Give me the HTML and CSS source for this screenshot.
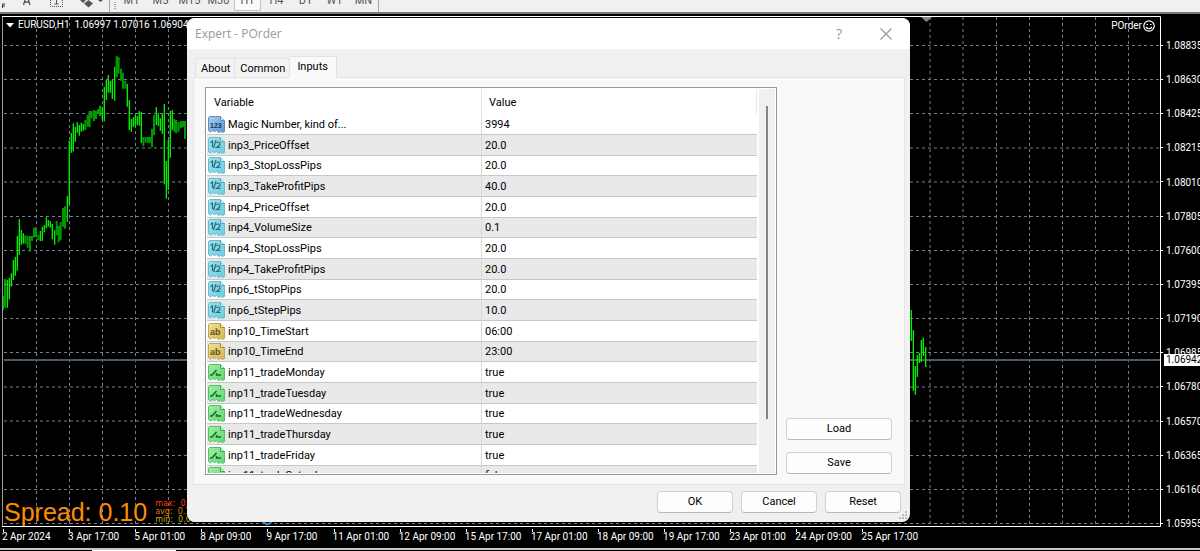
FILE: index.html
```
<!DOCTYPE html>
<html lang="en">
<head>
<meta charset="utf-8">
<title>EURUSD,H1 - Expert - POrder</title>
<link rel="stylesheet" href="styles.css">
</head>
<body>
<svg class="defs" aria-hidden="true">
  <defs>
    <linearGradient id="gBlue" x1="0" y1="0" x2="1" y2="1"><stop offset="0" stop-color="#a9cdee"/><stop offset="1" stop-color="#5c98d2"/></linearGradient>
    <linearGradient id="gCyan" x1="0" y1="0" x2="1" y2="1"><stop offset="0" stop-color="#a5e0ea"/><stop offset="1" stop-color="#6ccbe0"/></linearGradient>
    <linearGradient id="gGold" x1="0" y1="0" x2="1" y2="1"><stop offset="0" stop-color="#f0e29a"/><stop offset="1" stop-color="#d2b850"/></linearGradient>
    <linearGradient id="gGreen" x1="0" y1="0" x2="1" y2="1"><stop offset="0" stop-color="#a4eda4"/><stop offset="1" stop-color="#5fd673"/></linearGradient>
    <path id="sheet" d="M1.5.5H12.500L16.500 4.500V15.500L14.500 16.500L12.500 15.500L10.500 16.500L8.500 14.500L6.500 15.500L4.500 14.500L2.500 16L.5 14.500V1.500Z"/>
    <path id="fold" d="M12.500.5V4.500H16.500"/>
    <symbol id="int" viewBox="0 0 17 17"><use href="#sheet" fill="url(#gBlue)" stroke="#5b8fc4"/><use href="#fold" fill="#d3e6f7" stroke="#5b8fc4"/><text class="glyph" x="2" y="12" fill="#123a66">123</text></symbol>
    <symbol id="dbl" viewBox="0 0 17 17"><use href="#sheet" fill="url(#gCyan)" stroke="#67bccd"/><use href="#fold" fill="#c9eff5" stroke="#55a9bc"/><path d="M2.500 5.500L4.500 4V10M8 3L5.500 11M8.500 6Q9 5 10.500 5T12 7Q12 8 8.500 10.500H12.500" fill="none" stroke="#1d7083" stroke-width="1.200"/></symbol>
    <symbol id="str" viewBox="0 0 17 17"><use href="#sheet" fill="url(#gGold)" stroke="#c0a550"/><use href="#fold" fill="#f5ecc0" stroke="#a58c3c"/><text class="glyph wide" x="2" y="12" fill="#665010">ab</text></symbol>
    <symbol id="bool" viewBox="0 0 17 17"><use href="#sheet" fill="url(#gGreen)" stroke="#4fc267"/><use href="#fold" fill="#c4f5c8" stroke="#3eab55"/><path d="M2 11H4L8.500 6M8.500 9V11H13" fill="none" stroke="#126a28" stroke-width="1.500"/></symbol>
  </defs>
</svg>

<div class="terminal">
  <header class="toolbar">
    <svg class="tools" viewBox="0 0 116 12" aria-hidden="true">
      <path d="M2.500 8V4H5M2.500 6H5" fill="none" stroke="#333"/>
      <path d="M23.500 5L25 0M30 5L28.500 0M24.500 2H29" fill="none" stroke="#555" stroke-width="1.300"/>
      <path d="M50.500 0V6.500H62.500V0" fill="none" stroke="#555" stroke-dasharray="1 1"/>
      <path d="M56.500 0V4M54.500 4H58.500" fill="none" stroke="#555"/>
      <path d="M80 0L83 3L86 0M84 3.500L88.500 0L93 3.500L88.500 7.500ZM98 0H103L100.500 2Z" fill="#555"/>
      <path d="M109.500 0V12" stroke="#a8a8a8"/>
      <path d="M115 2V9" stroke="#a8a8a8" stroke-width="2" stroke-dasharray="1 1"/>
    </svg>
    <nav class="periods" aria-label="Timeframe">
      <button>M1</button><button>M5</button><button>M15</button><button>M30</button><button class="on">H1</button><button>H4</button><button>D1</button><button>W1</button><button>MN</button>
    </nav>
  </header>

  <main class="chart">
    <section class="plot">
      <svg class="canvas" viewBox="0 14 1164 514" preserveAspectRatio="none" aria-label="EURUSD hourly bars">
        <path class="grid" d="M36.500 17V526M69.500 17V526M102.500 17V526M135.500 17V526M168.500 17V526M930 17V526M963 17V526M996.500 17V526M1029.500 17V526M1062.500 17V526M1095.500 17V526M1128.500 17V526"/>
        <path class="grid" d="M4 45.500H1160M4 79.500H1160M4 113.500H1160M4 148H1160M4 182H1160M4 216.500H1160M4 250.500H1160M4 284.500H1160M4 318.500H1160M4 352.500H1160M4 387H1160M4 421H1160M4 455.500H1160M4 489.500H1160M4 523.500H1160"/>
        <path class="quote" d="M4 360H1160"/>
        <g class="bars" transform="translate(0 120) scale(.3333)">
          <path d="M9 528V570M15 477V563M22 480V563M28 474V538M34 460V500M40 420V480M46 410V467M52 348V452M58 297V404M64 330V374M70 340V371M121 333V363M127 320V363M133 315V337M139 292V325M145 300V320M151 303V323M157 312V358M164 330V374M202 228V306M208 62V253"/>
          <path class="dim" d="M76 346V371M83 348V383M90 348V395M96 348V362M102 323V352M108 322V352M115 345V360M170 303V346M176 318V367M182 306V361M189 264V320M195 259V326"/>
        </g>
        <g class="bars" transform="translate(0 40) scale(.3333)">
          <path d="M214 279V338M220 250V334M226 260V305M232 247V278M238 255V287M244 248V275M250 252V272M294 207V222M300 197V228M307 200V240M313 141V244M319 120V180M325 105V158M331 123V158M337 120V177M344 80V182M382 132V200M388 180V270M394 237V275M400 232V261M406 225V257M412 228V256M418 213V257M424 216V309M469 201V255M475 219V258M481 235V272M487 222V281M493 192V433M499 363V476M505 300V450M511 213V353M517 210V270"/>
          <path class="dim" d="M256 240V270M263 225V260M269 213V262M275 213V235M282 210V243M288 213V237M350 48V112M356 52V101M363 86V122M369 98V146M376 122V146M430 291V318M437 291V308M444 291V308M450 291V308M456 266V322M462 225V286M523 237V275M529 240V280M536 246V275M543 243V265M549 243V262M555 243V297"/>
        </g>
        <g class="bars" transform="translate(880 290) scale(.3333)">
          <path d="M94 60V153M100 120V302M106 228V314M112 195V261M118 189V219M124 150V216M130 143V198M137 171V231"/>
        </g>
        <path d="M262 520Q267 528 272 521" fill="none" stroke="#3d86c6" stroke-width="2"/>
        <path d="M921 17H932L926.500 22Z" fill="#778899"/>
        <path class="ticks" d="M1161 45.500H1163M1161 79.500H1163M1161 113.500H1163M1161 147.500H1163M1161 181.500H1163M1161 216.500H1163M1161 250.500H1163M1161 284.500H1163M1161 318.500H1163M1161 352.500H1163M1161 386.500H1163M1161 421.500H1163M1161 455.500H1163M1161 489.500H1163M1161 523.500H1163"/>
        <path d="M2.500 17V527" stroke="#9c9c9c"/>
        <path d="M2 16.500H1160.500V526.500H2" fill="none" stroke="#fff"/>
      </svg>
      <div class="legend">
        <svg viewBox="0 0 8 5" class="caret" aria-hidden="true"><path d="M0 0H8L4 4.500Z" fill="#fff"/></svg>
        <span>EURUSD,H1&nbsp; 1.06997 1.07016 1.06904</span>
      </div>
      <div class="expert">POrder
        <svg viewBox="0 0 12 12" class="smile" aria-hidden="true"><circle cx="6" cy="6" r="5.200" fill="none" stroke="#fff" stroke-width="1.200"/><path d="M3.500 4.500H5M7 4.500H8.500M3 7Q6 10.500 9 7" fill="none" stroke="#fff" stroke-width="1.200"/></svg>
      </div>
      <div class="spread">
        <strong>Spread: 0.10</strong>
        <ul><li class="max">max: &nbsp;0.30</li><li class="avg">avg: &nbsp;0.10</li><li class="min">min: &nbsp;0.00</li></ul>
      </div>
    </section>
    <aside class="prices">
      <span>1.08835</span><span>1.08630</span><span>1.08425</span><span>1.08215</span><span>1.08010</span><span>1.07805</span><span>1.07600</span><span>1.07395</span><span>1.07190</span><span>1.06985</span><span>1.06780</span><span>1.06570</span><span>1.06365</span><span>1.06160</span><span>1.05955</span>
      <b class="now">1.06942</b>
    </aside>
    <div class="times">
      <span>2 Apr 2024</span><span>3 Apr 17:00</span><span>5 Apr 01:00</span><span>8 Apr 09:00</span><span>9 Apr 17:00</span><span>11 Apr 01:00</span><span>12 Apr 09:00</span><span>15 Apr 17:00</span><span>17 Apr 01:00</span><span>18 Apr 09:00</span><span>19 Apr 17:00</span><span>23 Apr 01:00</span><span>24 Apr 09:00</span><span>25 Apr 17:00</span>
    </div>
  </main>
  <footer class="tabs-strip"><span></span></footer>

  <div class="dialog" role="dialog" aria-labelledby="dlg">
    <div class="titlebar">
      <h1 id="dlg">Expert - POrder</h1>
      <button class="help" aria-label="Help">?</button>
      <button class="close" aria-label="Close"><svg viewBox="0 0 12 12"><path d="M.5.5L11.500 11.500M11.500.5L.5 11.500" stroke="#999" stroke-width="1.200"/></svg></button>
    </div>
    <div class="tabs" role="tablist">
      <button role="tab">About</button><button role="tab">Common</button><button role="tab" class="active" aria-selected="true">Inputs</button>
    </div>
    <div class="panel">
      <div class="list">
        <div class="rows">
          <table>
            <thead><tr><th>Variable</th><th>Value</th></tr></thead>
            <tbody>
              <tr><td><svg><use href="#int"/></svg>Magic Number, kind of...</td><td>3994</td></tr>
              <tr><td><svg><use href="#dbl"/></svg>inp3_PriceOffset</td><td>20.0</td></tr>
              <tr><td><svg><use href="#dbl"/></svg>inp3_StopLossPips</td><td>20.0</td></tr>
              <tr><td><svg><use href="#dbl"/></svg>inp3_TakeProfitPips</td><td>40.0</td></tr>
              <tr><td><svg><use href="#dbl"/></svg>inp4_PriceOffset</td><td>20.0</td></tr>
              <tr><td><svg><use href="#dbl"/></svg>inp4_VolumeSize</td><td>0.1</td></tr>
              <tr><td><svg><use href="#dbl"/></svg>inp4_StopLossPips</td><td>20.0</td></tr>
              <tr><td><svg><use href="#dbl"/></svg>inp4_TakeProfitPips</td><td>20.0</td></tr>
              <tr><td><svg><use href="#dbl"/></svg>inp6_tStopPips</td><td>20.0</td></tr>
              <tr><td><svg><use href="#dbl"/></svg>inp6_tStepPips</td><td>10.0</td></tr>
              <tr><td><svg><use href="#str"/></svg>inp10_TimeStart</td><td>06:00</td></tr>
              <tr><td><svg><use href="#str"/></svg>inp10_TimeEnd</td><td>23:00</td></tr>
              <tr><td><svg><use href="#bool"/></svg>inp11_tradeMonday</td><td>true</td></tr>
              <tr><td><svg><use href="#bool"/></svg>inp11_tradeTuesday</td><td>true</td></tr>
              <tr><td><svg><use href="#bool"/></svg>inp11_tradeWednesday</td><td>true</td></tr>
              <tr><td><svg><use href="#bool"/></svg>inp11_tradeThursday</td><td>true</td></tr>
              <tr><td><svg><use href="#bool"/></svg>inp11_tradeFriday</td><td>true</td></tr>
              <tr><td><svg><use href="#bool"/></svg>inp11_tradeSaturday</td><td>false</td></tr>
            </tbody>
          </table>
        </div>
        <div class="scroll"><div class="thumb"></div></div>
      </div>
      <div class="side"><button class="btn">Load</button><button class="btn">Save</button></div>
    </div>
    <div class="actions">
      <button class="btn">OK</button><button class="btn">Cancel</button><button class="btn">Reset</button>
      <svg class="grip" viewBox="0 0 8 8" aria-hidden="true"><path d="M6 0H8V2H6ZM3 3H5V5H3ZM6 3H8V5H6ZM0 6H2V8H0ZM3 6H5V8H3ZM6 6H8V8H6Z" fill="#bbb"/></svg>
    </div>
  </div>
</div>
</body>
</html>
```
FILE: styles.css
```
* { box-sizing: border-box; }
body { margin: 0; background: #000; color: #fff; font: 10px/12px Roboto, "Liberation Sans", sans-serif; }
button { margin: 0; padding: 0; border: 0; background: none; color: inherit; font: inherit; }
svg { display: block; }
.defs { position: absolute; width: 0; height: 0; }

.terminal { position: relative; display: flex; flex-direction: column; min-height: 100vh; overflow: hidden; }

.toolbar { display: flex; height: 14px; background: #f0f0f0; border-bottom: 2px solid #777; overflow: hidden; }
.tools { width: 116px; height: 12px; }
.periods { display: flex; align-items: flex-start; height: 12px; padding-left: 1px; border-right: 1px solid #a8a8a8; }
.periods button { display: flex; align-items: flex-end; justify-content: center; width: 29px; height: 11px; padding-bottom: 4px; font-size: 11px; line-height: 13px; color: #555; }
.periods .on { width: 27px; margin: 0 1px; background: #fafafa; border: 1px solid #c4c4c4; border-top: 0; padding-bottom: 3px; }

.chart { display: grid; grid-template-columns: 1fr 36px; grid-template-rows: auto 1fr; flex: 1; }
.plot { position: relative; }
.canvas { width: 100%; height: 514px; }
.grid { fill: none; stroke: #708090; stroke-dasharray: 3 3; }
.quote { stroke: #4c5964; stroke-width: 2; }
.bars path { fill: none; stroke: #00f000; stroke-width: 4; }
.bars .dim { stroke: #009600; stroke-width: 6; }
.ticks { stroke: #fff; }
.legend { position: absolute; top: 5px; left: 6px; display: flex; align-items: center; gap: 4px; white-space: nowrap; }
.caret { width: 8px; height: 5px; }
.expert { position: absolute; top: 6px; right: 9px; display: flex; align-items: center; gap: 1px; }
.smile { width: 12px; height: 12px; }
.spread { position: absolute; left: 4px; bottom: 4px; display: flex; align-items: center; gap: 8px; color: #ff8c00; white-space: nowrap; }
.spread strong { font: 25px/28px "Liberation Sans", sans-serif; }
.spread ul { margin: 0; padding: 0; list-style: none; font: 8px/8px "DejaVu Sans", sans-serif; }
.max { color: #ff3c00; }
.avg { color: #e07800; }
.min { color: #c8b400; }
.prices { position: relative; display: flex; flex-direction: column; justify-content: space-between; height: 516px; padding: 26px 0 0 2px; overflow: hidden; }
.now { position: absolute; top: 340px; left: -2px; right: 0; padding-left: 4px; background: #fff; color: #000; font-weight: normal; }
.times { grid-column: 1; display: flex; margin-top: -1px; padding: 2px 0 0 2px; white-space: nowrap; }
.times span { position: relative; flex: 0 0 5.69%; }
.times span::before { content: ""; position: absolute; left: 1px; top: -2px; width: 1px; height: 3px; background: #fff; }
.tabs-strip { height: 3px; border-top: 2px solid #c8c4c8; }
.tabs-strip span { display: block; width: 84px; height: 1px; margin-left: 92px; background: #fff; }

.dialog { position: absolute; top: 18px; left: 187px; width: 723px; background: #f0f0f0; color: #000; border-radius: 8px; overflow: hidden; font-size: 11px; line-height: 14px; }
.titlebar { display: flex; align-items: center; height: 31px; padding: 0 18px 0 8px; background: #fff; color: #999; }
.titlebar h1 { flex: 1; margin: 0; font: 12px/16px "Open Sans", sans-serif; }
.help { width: 12px; margin-right: 35px; font: 14px/16px "Open Sans", sans-serif; }
.close svg { width: 12px; height: 12px; }
.tabs { display: flex; align-items: flex-end; padding: 7px 8px 0; }
.tabs button { height: 19px; padding: 2px 4px 0 5px; border: 1px solid #e3e3e3; border-bottom: 0; background: #f3f3f3; }
.tabs button + button { border-left: 0; }
.tabs .active { position: relative; height: 22px; margin-bottom: -1px; padding: 0 8px 1px 7px; background: #f9f9f9; }
.panel { display: flex; gap: 9px; margin: 0 5px 0 6px; padding: 9px 12px 9px 11px; background: #f9f9f9; border: 1px solid #e5e5e5; }
.list { display: flex; flex: 1; height: 388px; padding: 1px; gap: 2px; background: #fff; border: 1px solid #8f99a8; }
.rows { flex: 1; overflow: hidden; }
.rows table { width: 100%; table-layout: fixed; border-collapse: separate; border-spacing: 0; }
.rows th { height: 25px; padding: 2px 7px 0; text-align: left; font-weight: normal; border-right: 1px solid #e5e5e5; }
.rows th:first-child { width: 275px; }
.rows td { height: 21px; padding: 1px 3px 0; border-bottom: 1px solid #c8c8c8; vertical-align: bottom; line-height: 18px; }
.rows td:first-child { padding-left: 1px; border-right: 1px solid #d8d8d8; }
.rows tr:nth-child(3n) td { height: 20px; }
.rows tbody tr:nth-child(even) { background: #e9e9e9; }
.rows svg { float: left; width: 17px; height: 17px; margin-right: 3px; }
.glyph { font: bold 7px "Liberation Sans", sans-serif; }
.glyph.wide { font-size: 9px; }
.scroll { width: 16px; padding: 17px 7px 54px; background: #f0f0f0; }
.thumb { width: 2px; height: 100%; background: #858585; }
.side { display: flex; flex-direction: column; justify-content: flex-end; gap: 12px; width: 106px; padding-bottom: 1px; }
.btn { width: 76px; height: 22px; background: #fdfdfd; border: 1px solid #d0d0d0; border-bottom-color: #b8b8b8; border-radius: 4px; }
.side .btn { width: 100%; }
.actions { position: relative; display: flex; justify-content: flex-end; gap: 8px; padding: 6px 9px 9px; }
.grip { position: absolute; right: 3px; bottom: 3px; width: 8px; height: 8px; }
```
